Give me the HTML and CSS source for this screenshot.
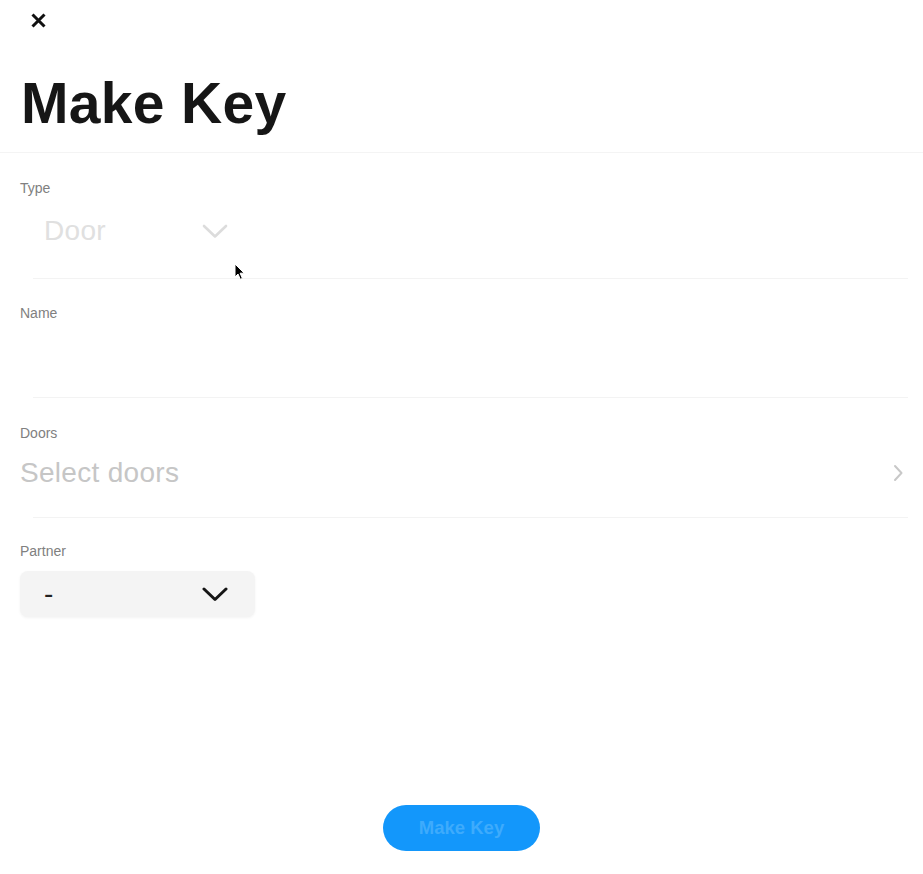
FILE: index.html
```
<!DOCTYPE html>
<html lang="en">
<head>
<meta charset="utf-8">
<title>Make Key</title>
<link rel="stylesheet" href="styles.css">
</head>
<body>
<div class="page">
  <header class="top">
    <button class="close" type="button" aria-label="Close">
      <svg width="17" height="17" viewBox="0 0 17 17"><path d="M2.5 2.5 L14.5 14.5 M14.5 2.5 L2.5 14.5" stroke="#111" stroke-width="3" fill="none"/></svg>
    </button>
    <h1 class="title">Make Key</h1>
  </header>

  <div class="form">
    <div class="field field--type">
      <div class="label">Type</div>
      <div class="select select--disabled">
        <span class="select-value">Door</span>
        <svg class="chev" width="26" height="15" viewBox="0 0 26 15"><path d="M2 2 L13 12.5 L24 2" stroke="#dcdcdc" stroke-width="2.6" fill="none" stroke-linecap="round" stroke-linejoin="round"/></svg>
      </div>
    </div>
    <div class="divider"></div>

    <div class="field field--name">
      <div class="label">Name</div>
      <div class="input"></div>
    </div>
    <div class="divider"></div>

    <div class="field field--doors">
      <div class="label">Doors</div>
      <div class="row">
        <span class="placeholder">Select doors</span>
        <svg width="11" height="18" viewBox="0 0 11 18"><path d="M2 2 L8.5 9 L2 16" stroke="#c8c8c8" stroke-width="2" fill="none" stroke-linecap="round" stroke-linejoin="round"/></svg>
      </div>
    </div>
    <div class="divider"></div>

    <div class="field field--partner">
      <div class="label">Partner</div>
      <div class="select select--active">
        <span class="select-value">-</span>
        <svg class="chev" width="26" height="15" viewBox="0 0 26 15"><path d="M2 2 L13 12.5 L24 2" stroke="#151515" stroke-width="3" fill="none" stroke-linecap="round" stroke-linejoin="round"/></svg>
      </div>
    </div>
  </div>

  <div class="actions">
    <button class="primary" type="button">Make Key</button>
  </div>

  <svg class="cursor" width="12" height="18" viewBox="0 0 12 18"><path d="M1 1 L1 14 L4 11 L6.3 16.3 L8.4 15.4 L6.1 10.2 L10.2 10.2 Z" fill="#000" stroke="#fff" stroke-width="1"/></svg>
</div>
</body>
</html>
```
FILE: styles.css
```
* { box-sizing: border-box; }
html, body { margin: 0; padding: 0; background: #fff; }
body { font-family: "Liberation Sans", Arial, Helvetica, sans-serif; color: #111; }

.page {
  position: relative;
  min-height: 100vh;
  display: flex;
  flex-direction: column;
}

.top {
  padding: 12px 0 20px 0;
  border-bottom: 1px solid #f4f4f4;
}
.close {
  display: block;
  margin: 0 0 0 30px;
  padding: 0;
  border: 0;
  background: none;
  width: 17px;
  height: 17px;
}
.close svg { display: block; }
.title {
  margin: 46px 0 0 0;
  padding-left: 21px;
  font-size: 57px;
  line-height: 57px;
  font-weight: 700;
  letter-spacing: 0.3px;
  color: #161616;
}

.field { padding: 0 20px; }
.field--type { padding-top: 27px; padding-bottom: 24px; }
.field--name { padding-top: 26px; padding-bottom: 18px; }
.field--doors { padding-top: 27px; padding-bottom: 28px; }
.field--partner { padding-top: 25px; }

.label {
  font-size: 14px;
  line-height: 16px;
  color: #808080;
}

.divider {
  height: 1px;
  background: #f3f3f3;
  margin: 0 15px 0 33px;
}

.select {
  margin-top: 12px;
  width: 235px;
  height: 46px;
  padding: 0 27px 0 22px;
  display: flex;
  align-items: center;
  justify-content: space-between;
  border-radius: 8px;
}
.select-value { font-size: 28px; line-height: 32px; }
.select--disabled .select-value { color: #e0e0e0; padding-left: 2px; letter-spacing: 0.3px; }
.select--active { background: #f4f4f4; box-shadow: 0 1px 3px rgba(0,0,0,0.05); }
.select--active .select-value { color: #222; padding-left: 2px; }
.chev { display: block; }

.input { margin-top: 12px; height: 46px; }

.row {
  margin-top: 16px;
  height: 32px;
  display: flex;
  align-items: center;
  justify-content: space-between;
}
.row svg { display: block; margin-right: -1px; }
.placeholder { font-size: 28px; line-height: 32px; color: #c6c6c6; letter-spacing: 0.3px; }

.actions {
  margin-top: auto;
  padding-bottom: 23px;
  display: flex;
  justify-content: center;
}
.primary {
  width: 157px;
  height: 46px;
  border: 0;
  border-radius: 23px;
  background: #1397fb;
  color: #3eabfc;
  font-family: "Liberation Sans", Arial, Helvetica, sans-serif;
  font-size: 18.5px;
  font-weight: 700;
  padding: 0;
}

.cursor {
  position: absolute;
  left: 234px;
  top: 263px;
}
```
